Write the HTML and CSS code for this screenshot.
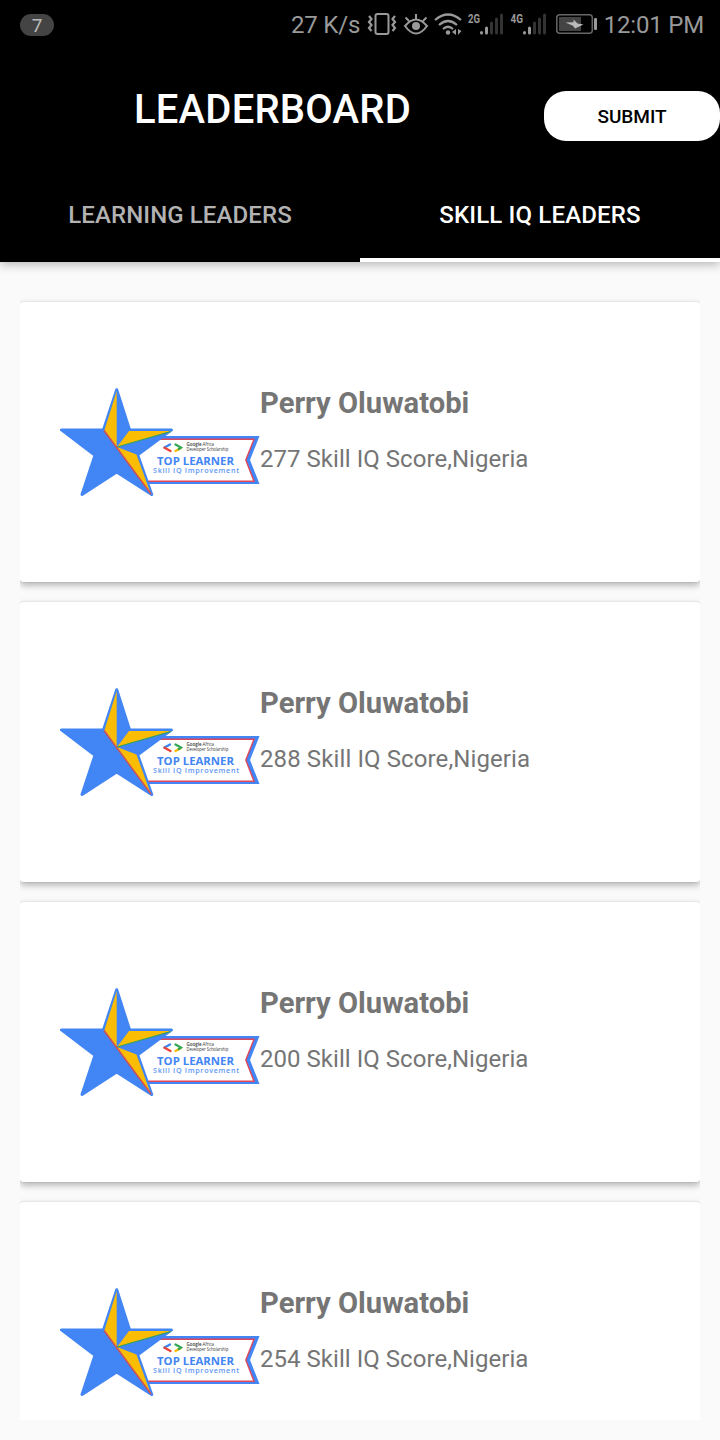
FILE: index.html
```
<!DOCTYPE html>
<html lang="en">
<head>
<meta charset="utf-8">
<title>Leaderboard</title>
<link rel="stylesheet" href="styles.css">
</head>
<body>
<svg width="0" height="0" class="defs" aria-hidden="true">
  <symbol id="badge" viewBox="60 386 200 112" overflow="visible">
    <path d="M118 436H259.500L250 460L259.500 484H135Z" fill="#4285f4"/>
    <path d="M118 439.200H254L245.800 460L254 481.200H135Z" fill="#fff" stroke="#e0475b" stroke-width="1.400"/>
    <path d="M116.700 389.700L129.600 429.900H171.500L137.700 454.900L151.700 494.500L116.700 472L82 494.500L95 455.200L61.500 429.900H103.500Z" fill="#4285f4" stroke="#4285f4" stroke-width="3" stroke-linejoin="round"/>
    <path d="M116.700 391V447L104.500 430Z" fill="#fbbc04"/>
    <path d="M129 431H171L117 447Z" fill="#fbbc04"/>
    <path d="M117 447L136.500 454.500L150.500 493Z" fill="#fbbc04"/>
    <path d="M117 447L171 431.500" stroke="#34a05a" stroke-width="1.200"/>
    <path d="M104 430.500L151 494" stroke="#d94b4b" stroke-width="1.300"/>
    <g fill="none" stroke-width="2.300" stroke-linecap="round">
      <path d="M170 444.500L164.500 447.500" stroke="#4285f4"/>
      <path d="M164.500 447.700L170.500 451" stroke="#ea4335"/>
      <path d="M180.500 448.200L175.500 451" stroke="#fbbc04"/>
      <path d="M175.500 444.500L181 447.500L178.800 449" stroke="#34a853"/>
    </g>
    <g class="badge-text">
      <text x="186.500" y="446.300" font-size="4.600" font-weight="600" fill="#333" textLength="15" lengthAdjust="spacingAndGlyphs">Google</text>
      <text x="202.500" y="446.300" font-size="4.600" fill="#333" textLength="11.500" lengthAdjust="spacingAndGlyphs">Africa</text>
      <text x="186.500" y="451.200" font-size="4.600" fill="#333" textLength="42" lengthAdjust="spacingAndGlyphs">Developer Scholarship</text>
      <text x="157" y="464.500" font-size="9.900" font-weight="700" fill="#4285f4" textLength="77" lengthAdjust="spacingAndGlyphs">TOP LEARNER</text>
      <text x="153" y="472.800" font-size="7.200" font-weight="600" fill="#5f97f5" textLength="86">Skill IQ Improvement</text>
    </g>
  </symbol>
</svg>
<header class="app-header">
  <div class="status-bar">
    <span class="count">7</span>
    <span class="speed">27 K/s</span>
    <svg class="status-icons" width="236" height="40" viewBox="364 4 236 40" fill="none" stroke="#999">
      <rect x="375.500" y="14" width="13" height="20" rx="2" stroke-width="2"/>
      <path d="M369 16l2.500 3l-2.500 3l2.500 3l-2.500 3l2.500 3M395 16l-2.500 3l2.500 3l-2.500 3l2.500 3l-2.500 3" stroke-width="2.200"/>
      <path d="M405 26Q416 13 427 26Q416 41 405 26ZM416 19V14M409 21L405.500 17.500M423 21L426.500 17.500" stroke-width="2"/>
      <circle cx="416" cy="26" r="4" fill="#999" stroke="none"/>
      <path d="M435 20Q448 9 461 20M439 25Q448 17 457 25M443 29Q448 24.500 453 29" stroke-width="2.200"/>
      <circle cx="448" cy="32.500" r="2.200" fill="#999" stroke="none"/>
      <path d="M456 29v6l-4-3zM458 29v6l3.500-4z" fill="#999" stroke="none"/>
      <g stroke-width="3" stroke-linecap="round">
        <path d="M481.500 32.500v.500M486.500 28v5M524.500 32.500v.500M529.500 28v5"/>
        <path d="M491.500 23v10M496.500 19v14M501.500 15v18M534.500 23v10M539.500 19v14M544.500 15v18" stroke="#333"/>
      </g>
      <g class="net" fill="#999" stroke="none">
        <text x="468" y="23" textLength="12" lengthAdjust="spacingAndGlyphs">2G</text>
        <text x="510.500" y="23" textLength="12.500" lengthAdjust="spacingAndGlyphs">4G</text>
      </g>
      <rect x="556.800" y="14.800" width="35.500" height="18.400" rx="3" stroke="#666" stroke-width="1.500"/>
      <rect x="559" y="17" width="22" height="14" fill="#444" stroke="none"/>
      <path d="M565.500 22.500L573.500 22.300V19.500L577.500 23.500L583.500 24.500L575 28.500L573 25.800Z" fill="#bbb" stroke="none"/>
      <rect x="594" y="18" width="3" height="12" rx="1" fill="#999" stroke="none"/>
    </svg>
    <span class="clock">12:01 PM</span>
  </div>
  <div class="toolbar">
    <h1>LEADERBOARD</h1>
    <button class="submit">SUBMIT</button>
  </div>
  <nav class="tabs">
    <a class="tab">LEARNING LEADERS</a>
    <a class="tab active">SKILL IQ LEADERS</a>
  </nav>
</header>
<main class="list">
  <article class="card">
    <svg class="badge"><use href="#badge"/></svg>
    <div class="info"><h2>Perry Oluwatobi</h2><p>277 Skill IQ Score,Nigeria</p></div>
  </article>
  <article class="card">
    <svg class="badge"><use href="#badge"/></svg>
    <div class="info"><h2>Perry Oluwatobi</h2><p class="wide">288 Skill IQ Score,Nigeria</p></div>
  </article>
  <article class="card">
    <svg class="badge"><use href="#badge"/></svg>
    <div class="info"><h2>Perry Oluwatobi</h2><p>200 Skill IQ Score,Nigeria</p></div>
  </article>
  <article class="card">
    <svg class="badge"><use href="#badge"/></svg>
    <div class="info"><h2>Perry Oluwatobi</h2><p>254 Skill IQ Score,Nigeria</p></div>
  </article>
</main>
</body>
</html>
```
FILE: styles.css
```
* { box-sizing: border-box; margin: 0; }
body {
  height: 1440px;
  overflow: hidden;
  background: #fafafa;
  font-family: Roboto, "Liberation Sans", sans-serif;
}
.defs { display: block; height: 0; }
.app-header {
  height: 262px;
  background: #000;
  color: #fff;
  box-shadow: 0 2px 10px rgba(0, 0, 0, .3);
}
.status-bar {
  display: flex;
  align-items: center;
  height: 48px;
  padding: 2px 16px 0 20px;
  color: #999;
  font-size: 24px;
  line-height: 46px;
}
.count {
  flex: none;
  width: 34px;
  height: 22px;
  border-radius: 11px;
  background: #444;
  color: #bbb;
  font-size: 19px;
  line-height: 23px;
  text-align: center;
}
.speed { flex: none; width: 73px; margin-left: 237px; letter-spacing: -.2px; white-space: nowrap; }
.status-icons { flex: none; margin-top: -2px; }
.net { font: 700 12px Roboto, sans-serif; }
.clock { margin-left: auto; letter-spacing: -.2px; white-space: nowrap; }
.toolbar {
  display: flex;
  align-items: flex-start;
  justify-content: space-between;
  height: 120px;
  padding-left: 134px;
}
h1 {
  margin-top: 39px;
  font-size: 40px;
  font-weight: 500;
  line-height: 46px;
  letter-spacing: .2px;
}
.submit {
  width: 176px;
  height: 50px;
  margin-top: 43px;
  border: 0;
  border-radius: 22px;
  background: #fff;
  color: #000;
  font: 500 19px Roboto, "Liberation Sans", sans-serif;
}
.tabs { display: flex; height: 94px; }
.tab {
  flex: 1;
  border-bottom: 4px solid transparent;
  color: #b2b2b2;
  font-size: 24px;
  font-weight: 500;
  line-height: 94px;
  letter-spacing: .1px;
  text-align: center;
}
.tab.active { border-color: #fff; color: #fff; letter-spacing: .16px; }
.list {
  display: flex;
  flex-direction: column;
  gap: 20px;
  height: 1138px;
  margin: 20px 20px 0;
  padding-top: 20px;
  overflow: hidden;
}
.card {
  display: flex;
  flex: none;
  height: 280px;
  padding: 84px 40px 0;
  border-radius: 3px;
  background: #fff;
  box-shadow: 0 3px 7px rgba(0, 0, 0, .3), 0 0 2px rgba(0, 0, 0, .12);
}
.badge { flex: none; width: 200px; height: 112px; }
.badge-text { font-family: "Open Sans", Roboto, sans-serif; }
.info { color: #757575; white-space: nowrap; }
h2 { font-size: 29.200px; font-weight: 700; line-height: 34px; }
p { margin-top: 23px; font-size: 24px; line-height: 32px; letter-spacing: .04px; }
.wide { letter-spacing: .11px; }
```
